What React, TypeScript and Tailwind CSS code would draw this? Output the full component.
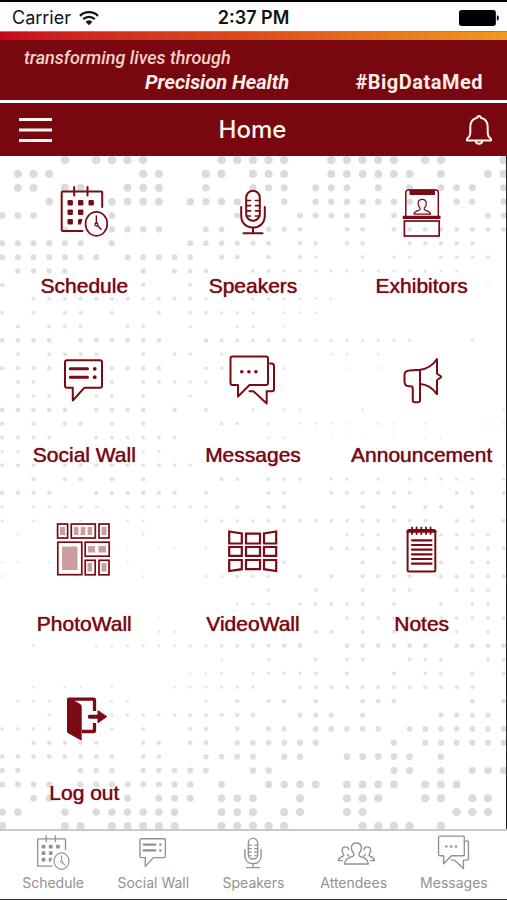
import type { ReactNode } from "react";

const COLUMN_STEP = 15.67;
const ROW_STEP = 13.875;

// Each entry: radius on the left half, radius on the right half, filled columns.
const DOT_ROWS: [number, number, number[]][] = [
  [4.3, 4.2, [4, 6, 7, 8, 9, 14, 15, 16, 17, 18, 21, 22, 23, 24, 25, 27, 28, 32]],
  [4.2, 3.9, [1, 2, 3, 9, 10, 13, 14, 16, 17, 18, 21, 22, 23, 24, 25, 26, 28, 31, 32]],
  [3.9, 3.4, [1, 2, 4, 5, 8, 9, 10, 13, 16, 17, 18, 20, 21, 22, 24, 26, 28, 29, 30, 32]],
  [3.8, 3.2, [3, 7, 8, 9, 10, 12, 13, 14, 15, 18, 20, 21, 22, 23, 24, 25, 26, 29, 30, 32]],
  [3.3, 2.9, [0, 1, 2, 7, 15, 19, 20, 21, 22, 23, 25, 31, 32]],
  [3.1, 2.4, [4, 7, 8, 9, 10, 13, 14, 17, 18, 19, 22, 23, 25, 26, 27, 28, 29, 30, 31, 32]],
  [3.1, 2.2, [0, 1, 2, 3, 4, 5, 7, 12, 13, 14, 15, 16, 17, 19, 20, 22, 23, 26, 27, 28, 29, 30]],
  [3, 1.9, [0, 1, 2, 3, 4, 5, 6, 8, 9, 10, 11, 12, 14, 15, 17, 19, 20, 23, 25, 26, 28, 29, 30, 31]],
  [2.7, 1.6, [1, 2, 3, 4, 9, 11, 12, 13, 16, 17, 18, 19, 20, 21, 22, 23, 24, 25, 26, 27, 28, 29]],
  [2.2, 1, [0, 5, 9, 12, 19, 31]],
  [2.1, 1.3, [2, 3, 4, 5, 6, 7, 8, 9, 10, 11, 12, 13, 16, 17, 18, 19, 20, 21]],
  [2, 1.3, [0, 2, 4, 5, 7, 10, 12, 13, 14, 15, 16, 18, 19, 20]],
  [2, 1, [1, 3, 4, 5, 8, 9, 12, 15, 16, 18]],
  [2.4, 1.7, [0, 1, 2, 3, 5, 6, 7, 8, 9, 10, 13, 14, 15, 16, 17, 18, 19, 20, 21, 22, 23, 24, 25, 26, 30]],
  [2, 1.3, [1, 3, 4, 5, 6, 9, 11, 12, 14, 21, 22, 24]],
  [2.2, 1.1, [0, 1, 2, 3, 7, 8, 9, 10, 13, 14, 18, 22, 24]],
  [2, 1, [1, 2, 7, 9, 10, 11, 12, 13]],
  [1.9, 1, [1, 2, 3, 6, 7, 9, 12]],
  [2.3, 1.3, [0, 1, 2, 3, 4, 6, 7, 8, 9, 11, 13, 16, 18, 19, 23, 32]],
  [2.2, 1.2, [0, 2, 4, 5, 7, 9, 14, 15, 17, 19, 20, 21, 22, 24, 25, 27, 31, 32]],
  [1.9, 1, [0, 1, 2, 3, 6, 7, 8, 9, 10, 11, 17, 18, 21, 22, 23, 25, 27, 28]],
  [1.6, 1, [0, 1, 3, 9, 10]],
  [2, 1.2, [0, 1, 2, 4, 5, 6, 7, 8, 9, 10, 11, 12, 32]],
  [2.2, 1.7, [2, 4, 5, 7, 9, 14, 15, 17, 18, 19, 21, 22, 24, 26, 27, 28, 29, 30, 32]],
  [2.2, 2, [0, 1, 2, 3, 6, 7, 8, 9, 10, 11, 13, 17, 18, 21, 22, 23, 24, 25, 26, 29, 30, 32]],
  [1.7, 2.1, [0, 2, 3, 4, 5, 6, 8, 9, 10, 11, 12, 13, 15, 17, 18, 23, 25, 27, 28, 30]],
  [1.5, 2, [0, 2, 5, 8, 9, 13, 14, 15, 16, 17, 18, 19, 20, 21, 22, 23, 24, 25, 26, 27, 29, 30, 32]],
  [1.4, 1.8, [1, 4, 5, 9, 22, 23, 24, 28, 29, 30, 31]],
  [1, 1.9, [5, 7, 8, 10, 11, 13, 21, 22, 23, 24, 25, 29, 30, 31, 32]],
  [1.1, 2, [0, 1, 3, 8, 18, 23, 25, 28, 30, 31]],
  [1.2, 2.1, [0, 9, 13, 14, 15, 16, 17, 19, 21, 23, 24, 25, 26, 28, 29, 30, 31, 32]],
  [1, 1.9, [17, 20, 23, 25, 26, 29, 30, 31]],
  [1, 1.9, [15, 16, 17, 19, 20, 21, 22, 23, 25, 28, 30, 31]],
  [1, 1.9, [10, 22, 23, 24, 25, 26, 27, 28, 29, 30, 31, 32]],
  [1.4, 1.9, [10, 11, 20, 21, 23, 25, 29, 31]],
  [1.5, 2.4, [2, 6, 7, 8, 9, 10, 11, 12, 13, 14, 15, 16, 17, 18, 19, 22, 23, 24, 25, 26, 27, 29, 30, 31, 32]],
  [1, 1.9, [14, 17, 20, 22, 23, 26, 27, 28, 31, 32]],
  [1.1, 2, [12, 13, 14, 16, 17, 18, 19, 20, 22, 25, 27, 28, 30, 32]],
  [1.3, 2.1, [2, 4, 5, 7, 11, 12, 13, 14, 15, 16, 19, 20, 21, 22, 23, 24, 25, 26, 27, 28, 29, 30]],
  [1.5, 2.4, [1, 2, 3, 7, 8, 13, 15, 17, 18, 20, 23, 24, 25, 30, 32]],
  [1.8, 2.6, [3, 7, 8, 9, 10, 11, 12, 13, 14, 15, 16, 19, 20, 21, 23, 28, 29, 30, 31]],
  [1.9, 2.8, [0, 1, 2, 3, 5, 7, 9, 12, 13, 15, 17, 18, 20, 21, 22, 23, 24, 26, 27, 28, 29, 30, 31, 32]],
  [2.2, 3.1, [2, 3, 4, 5, 6, 9, 10, 12, 13, 15, 16, 17, 18, 19, 20, 25, 27, 28, 29, 30, 31, 32]],
  [2.4, 3.3, [0, 1, 2, 3, 4, 5, 6, 7, 9, 10, 13, 14, 15, 16, 18, 19, 22, 23, 24, 25, 26, 28]],
  [2.7, 3.6, [0, 1, 5, 6, 7, 9, 10, 11, 12, 13, 16, 17, 25, 26, 28, 30, 31, 32]],
  [3, 3.9, [0, 1, 2, 3, 5, 6, 7, 8, 9, 10, 11, 12, 14, 17, 18, 19, 20, 22, 23, 24, 25, 27, 28, 29]],
  [3.4, 4.1, [2, 3, 8, 10, 11, 12, 14, 15, 16, 19, 22, 23, 24, 27, 28, 30, 31]],
  [3.7, 4.2, [0, 1, 4, 6, 7, 8, 9, 10, 11, 14, 15, 16, 18, 19, 22, 23, 29, 30, 31]],
  [4, 4.3, [0, 4, 5, 7, 8, 9, 10, 11, 14, 15, 16, 17, 18, 23, 24, 25, 26, 28]],
];

function DotPattern() {
  return (
    <svg
      aria-hidden="true"
      viewBox="0 0 507 673"
      preserveAspectRatio="xMidYMin slice"
      className="absolute inset-0 h-full w-full"
      fill="#dcdbdc"
    >
      {DOT_ROWS.map(([left, right, columns], row) =>
        columns.map((column) => {
          const weight = Math.min(1, Math.max(0, (column - 10) / 10));
          const radius = left + (right - left) * weight;
          return (
            <circle
              key={`${row}-${column}`}
              cx={2.7 + column * COLUMN_STEP}
              cy={4 + row * ROW_STEP}
              r={radius}
              opacity={Math.min(1, 0.45 + radius * 0.16)}
            />
          );
        })
      )}
    </svg>
  );
}

function Icon({ className, children }: { className: string; children: ReactNode }) {
  return (
    <svg
      aria-hidden="true"
      viewBox="0 0 64 64"
      className={className}
      fill="none"
      stroke="currentColor"
      strokeWidth="2"
      strokeLinejoin="round"
      strokeLinecap="round"
    >
      {children}
    </svg>
  );
}

const scheduleArt = (
  <>
    <path d="M50.2 27V12.5a1 1 0 0 0-1-1H10.700a1 1 0 0 0-1 1v37.500a1 1 0 0 0 1 1H30.500M22.200 7v8.500M35.500 7v8.500" />
    <g fill="currentColor" stroke="none">
      <rect x="15.500" y="20" width="5.400" height="5.400" rx="1" />
      <rect x="26" y="20" width="5.400" height="5.400" rx="1" />
      <rect x="36.500" y="20" width="5.400" height="5.400" rx="1" />
      <rect x="15.500" y="29.500" width="5.400" height="5.400" rx="1" />
      <rect x="26" y="29.500" width="5.400" height="5.400" rx="1" />
      <rect x="15.500" y="39" width="5.400" height="5.400" rx="1" />
      <path d="M27 39h3.500l-1.500 5.400h-3V40z" />
    </g>
    <ellipse cx="44.400" cy="43.800" rx="10.900" ry="12" strokeWidth="1.700" />
    <circle cx="44.400" cy="44.500" r="1.500" strokeWidth="1.300" />
    <path d="M44.400 36v7M45.500 45.500l3.500 3.800" strokeWidth="1.500" />
  </>
);

const micArt = (
  <>
    <rect x="25.200" y="10.800" width="13.600" height="30" rx="6.800" />
    <path d="M20.200 27v8.500C20.200 43 25 47.500 32 47.500S43.800 43 43.800 35.500V27M32 47.500v5.500M22.500 53.300h19" />
    <path
      d="M25.500 20.500h4M25.500 25.700h4M25.500 30.800h4M25.500 36h4M38.500 20.500h-4M38.500 25.700h-4M38.500 30.800h-4M38.500 36h-4"
      strokeWidth="1.700"
    />
  </>
);

const exhibitorArt = (
  <>
    <path d="M15.800 36V12.500a2.500 2.500 0 0 1 2.500-2.500h27.500a2.500 2.500 0 0 1 2.500 2.500V36" strokeWidth="1.500" />
    <path d="M19.500 9.500h25.500v5.500H19.500zM12.700 35.800h37.800v3.200H12.700z" fill="currentColor" stroke="none" />
    <rect x="14.400" y="41" width="34.800" height="15" strokeWidth="1.700" strokeLinejoin="miter" />
    <path
      d="M32.200 19.300c-2.700 0-4.100 1.700-4.100 4.200 0 2 .9 3 1.700 4.100.7 1.100.4 2.200-.7 2.600-2.500.9-4.800 1.200-5.200 4h16.700c-.4-2.800-2.800-3.100-5.300-4-1.100-.4-1.400-1.500-.7-2.600.8-1.100 1.700-2.100 1.700-4.100 0-2.500-1.400-4.200-4.100-4.200z"
      strokeWidth="1.200"
    />
  </>
);

const socialArt = (
  <>
    <path d="M15 11.200h33a2 2 0 0 1 2 2v23.500a2 2 0 0 1-2 2H32.500L20.800 51.500V38.700H15a2 2 0 0 1-2-2V13.200a2 2 0 0 1 2-2z" />
    <path d="M18.300 19.800h17.200M18.300 28.200h17.200" strokeWidth="3" />
    <circle cx="42.700" cy="19.800" r="1.900" fill="currentColor" stroke="none" />
    <circle cx="42.700" cy="28.200" r="1.900" fill="currentColor" stroke="none" />
  </>
);

const messagesArt = (
  <>
    <path d="M11.500 7.500h33.500a2 2 0 0 1 2 2V34a2 2 0 0 1-2 2H28.500L17 47.500V36h-5.500a2 2 0 0 1-2-2V9.500a2 2 0 0 1 2-2z" />
    <path d="M49 14.600h1.500a2.500 2.500 0 0 1 2.500 2.500v23.200a2 2 0 0 1-2 2h-5.300V54.500L33.500 43.200a3 3 0 0 0-2-.9h-3" />
    <g fill="currentColor" stroke="none">
      <circle cx="20.800" cy="22.700" r="1.800" />
      <circle cx="27.900" cy="22.700" r="1.800" />
      <circle cx="34.900" cy="22.700" r="1.800" />
    </g>
  </>
);

const announceArt = (
  <path d="M30 20.800C37 20 43 16 47 10v14.200c.5 2 3.800 1.700 4.200 3.600-.4 1.900-3.700 1.700-4.200 3.600V45.300c-4-6-10-10-17-10.400M30 20.800l-10.500.6c-3 .1-5 1.800-5 4.600v6.500c0 3.200 2 4.700 4.500 4.700h1.600c1.500 0 2.200.8 2.200 2.300V51.500a1.800 1.800 0 0 0 1.800 1.800h3.600A1.800 1.800 0 0 0 30 51.500z" />
);

const photoArt = (
  <>
    <g fill="currentColor" stroke="none" opacity="0.400">
      <path d="M8 9h5v8H8zM22 9h4.500v8H22zM28.800 9h4.500v8h-4.500zM35.600 9h4.500v8h-4.500zM49.500 9h5v8h-5zM10 28.500h15.500v23.500H10zM36 28h7v6.500h-7zM46.500 28h7.500v6.500h-7.500zM35.500 45h4.500v8.500h-4.500zM49.500 45h5v8.500h-5z" />
    </g>
    <g strokeWidth="1.700" strokeLinejoin="miter">
      <rect x="5.600" y="6" width="10" height="14" />
      <rect x="19.300" y="6" width="24" height="14" />
      <rect x="47" y="6" width="10" height="14" />
      <rect x="5.800" y="24.200" width="24" height="32.500" />
      <rect x="33.200" y="24.200" width="24" height="14" />
      <rect x="33.200" y="42.300" width="10" height="14.500" />
      <rect x="47" y="42.300" width="10" height="14.500" />
    </g>
  </>
);

const videoArt = (
  <g strokeLinejoin="miter" strokeWidth="2.200">
    <path d="M8.200 13.500l12.600 2v10H8.200zM25 15.700h14v9.800H25zM55.200 13.500l-12.200 2v10h12.200z" />
    <path d="M8.200 29h12.600v8.800H8.200zM25 29h14v8.800H25zM43 29h12.200v8.800H43z" />
    <path d="M8.200 42h12.600v9.200L8.200 53zM25 42h14v9.200H25zM43 42h12.200v11L43 51.200z" />
  </g>
);

const notesArt = (
  <>
    <rect x="17.600" y="12" width="27.700" height="41.500" rx="1.500" />
    <path d="M22 9.500v6.500M26.600 9.500v6.500M31.300 9.500v6.500M36 9.500v6.500M40.600 9.500v6.500" strokeWidth="1.800" />
    <path d="M18 13.300h27" strokeWidth="3" />
    <path d="M22 22.300h19.500M22 27h19.500M22 31.700h19.500M22 36.300h19.500M22 41h19.500M22 45.700h19.500" strokeWidth="2.200" />
  </>
);

const logoutArt = (
  <>
    <path d="M15 12.500c0-1.200.8-1.900 2-1.900l4.500 2.400 7 4.200c.8.500 1.200 1.200 1.200 2v34.500L16.200 46.200c-.8-.5-1.200-1-1.200-2z" fill="currentColor" stroke="none" />
    <path d="M17 12.200h24.500a1 1 0 0 1 1 1V24M42.500 36v7.500a1 1 0 0 1-1 1H30" strokeWidth="3.300" strokeLinecap="butt" />
    <path d="M37.700 29.800H46" strokeWidth="4" />
    <path d="M46 24v11.700l8.500-5.900z" fill="currentColor" strokeWidth="1" />
  </>
);

const attendeesArt = (
  <g strokeWidth="2">
    <path d="M35.500 17.500c-4.800 0-7.300 3-7.300 7.200 0 3.300 1.300 5.200 2.800 7 1.500 2 1 4.500-1.200 5.400-4.700 2-11 2.600-11.500 10.900h34.400c-.5-8.300-6.800-8.900-11.500-10.900-2.200-.9-2.700-3.400-1.200-5.400 1.500-1.800 2.800-3.700 2.800-7 0-4.200-2.500-7.200-7.300-7.200z" />
    <path d="M24.500 27c-.5-2.500-2.300-4-4.800-4-3.300 0-5 2.300-5 5.300 0 2.300 1 3.700 1.900 5 1 1.500.8 2.700-.8 3.400-3.200 1.300-6.300 2-6.500 6.300h6M22.500 34c.3 1.200.5 1.800 2.500 2.500M46.500 27c.5-2.500 2.300-4 4.800-4 3.300 0 5 2.300 5 5.300 0 2.300-1 3.700-1.900 5-1 1.500-.8 2.700.8 3.400 3.200 1.300 6.300 2 6.500 6.300h-6M48.500 34c-.3 1.200-.5 1.800-2.500 2.500" />
  </g>
);

const tiles = [
  { label: "Schedule", art: scheduleArt },
  { label: "Speakers", art: micArt },
  { label: "Exhibitors", art: exhibitorArt },
  { label: "Social Wall", art: socialArt },
  { label: "Messages", art: messagesArt },
  { label: "Announcement", art: announceArt },
  { label: "PhotoWall", art: photoArt },
  { label: "VideoWall", art: videoArt },
  { label: "Notes", art: notesArt },
  { label: "Log out", art: logoutArt },
];

const tabs = [
  { label: "Schedule", art: scheduleArt },
  { label: "Social Wall", art: socialArt },
  { label: "Speakers", art: micArt },
  { label: "Attendees", art: attendeesArt },
  { label: "Messages", art: messagesArt },
];

function StatusBar() {
  return (
    <div className="grid h-8 grid-cols-3 items-center border-t-2 border-b border-t-black border-b-[#8d8284] px-2 pt-0.5 text-lg text-[#111]">
      <span className="flex items-center gap-2 pl-1">
        Carrier
        <svg aria-hidden="true" viewBox="0 0 20 15" className="h-4 w-5" fill="none" stroke="currentColor" strokeWidth="2.300">
          <path d="M1 5.300a13 13 0 0 1 18 0M4.200 8.700a8.500 8.500 0 0 1 11.600 0" />
          <path d="M10 14.800L6.600 11.300a5 5 0 0 1 6.800 0z" fill="currentColor" stroke="none" />
        </svg>
      </span>
      <span className="text-center font-semibold">2:37 PM</span>
      <svg aria-hidden="true" viewBox="0 0 38 15" className="h-4 w-10 justify-self-end" fill="#000">
        <rect width="35" height="15" rx="2.500" />
        <path d="M36 5c2.500.5 2.500 4.500 0 5z" />
      </svg>
    </div>
  );
}

function Banner() {
  return (
    <div className="bg-[#780710] font-[Roboto,'Liberation_Sans',sans-serif] text-[#fdeee4]">
      <div className="h-2 bg-linear-to-r from-[#c8041f] via-[#dc4c1b] to-[#f09a1c]" />
      <div className="flex items-end justify-between px-6 py-1.5">
        <p className="flex flex-col italic">
          <span className="text-lg leading-6 font-medium text-[#f3d3ca]">transforming lives through</span>
          <strong className="pl-[121px] text-xl leading-6 font-bold">Precision Health</strong>
        </p>
        <p className="text-xl leading-6 font-bold tracking-wide">#BigDataMed</p>
      </div>
    </div>
  );
}

function TitleBar() {
  return (
    <header className="grid grid-cols-3 items-center border-t-3 border-white bg-[#780710] pr-3.5 pl-3 text-[#fff6f2]">
      <button type="button" aria-label="Menu" className="flex h-[53px] w-12 items-center justify-self-start pl-1">
        <svg aria-hidden="true" viewBox="0 0 36 24" className="h-6 w-9" stroke="currentColor" strokeWidth="3">
          <path d="M3 1.500h33M3 12h33M3 22.500h33" />
        </svg>
      </button>
      <h1 className="text-center text-2xl font-medium">Home</h1>
      <button type="button" aria-label="Notifications" className="justify-self-end">
        <svg aria-hidden="true" viewBox="0 0 28 32" className="h-8 w-7" fill="none" stroke="currentColor" strokeWidth="2" strokeLinejoin="round">
          <path d="M12.300 3.800c0-2.300 3.400-2.300 3.400 0 4.600.9 7 4.400 7 9.200v6.500c0 2 .8 3.300 3.300 5.500v1.500H2V25c2.500-2.200 3.300-3.500 3.300-5.500V13c0-4.800 2.400-8.300 7-9.200z" />
          <path d="M10.800 26.500c0 4.300 6.400 4.300 6.400 0" />
        </svg>
      </button>
    </header>
  );
}

export default function App() {
  return (
    <div className="flex min-h-screen flex-col border-b border-[#333] bg-white font-[Inter,'Liberation_Sans',sans-serif]">
      <StatusBar />
      <Banner />
      <TitleBar />
      <main className="relative flex-1 overflow-hidden border-r border-[#222]">
        <DotPattern />
        <div className="relative grid grid-cols-3 gap-y-6 pt-6 pb-5">
          {tiles.map(({ label, art }) => (
            <button
              key={label}
              type="button"
              className="flex h-[145px] flex-col items-center gap-7 text-[#7a0a14] last:h-[120px]"
            >
              <Icon className="size-16">{art}</Icon>
              <span className="font-['Liberation_Sans',Arial,sans-serif] text-[21px] leading-7 text-shadow-[0_0_1px_#7a0a14]">
                {label}
              </span>
            </button>
          ))}
        </div>
      </main>
      <nav className="grid grid-cols-5 border-t-2 border-[#c9c9c9] px-[3px] pb-2 text-[#929292]">
        {tabs.map(({ label, art }) => (
          <a key={label} href="#" className="flex flex-col items-center text-sm leading-4">
            <Icon className="size-11">{art}</Icon>
            {label}
          </a>
        ))}
      </nav>
    </div>
  );
}
